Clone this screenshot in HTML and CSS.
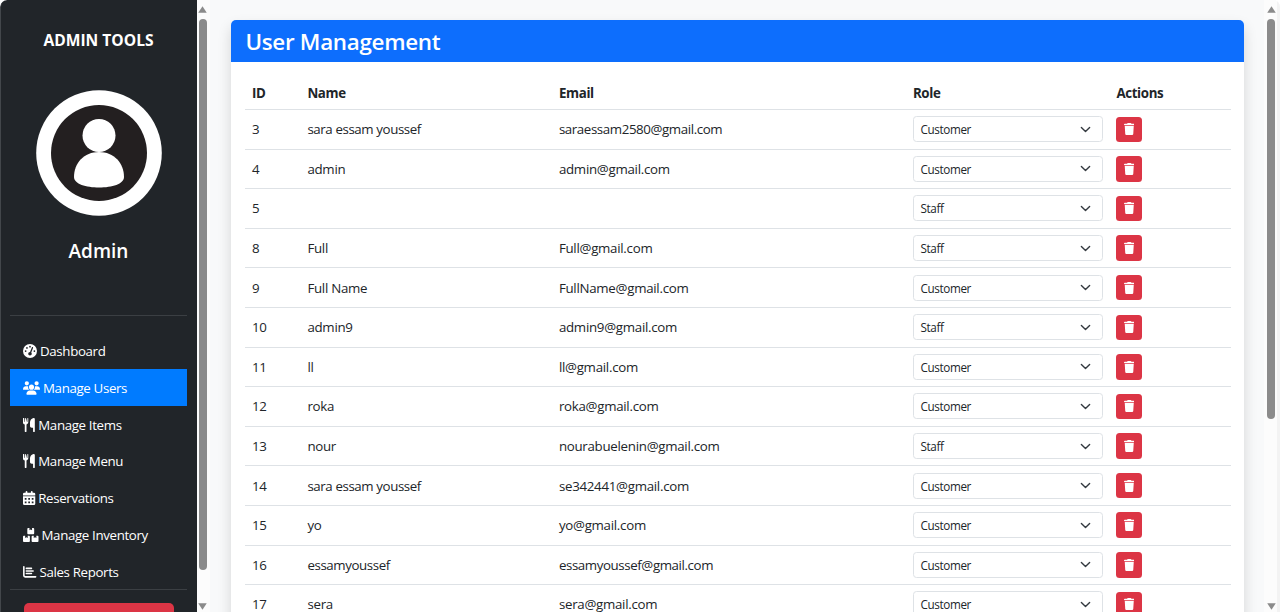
FILE: index.html
```html
<!DOCTYPE html>
<html lang="en">
<head>
<meta charset="utf-8">
<title>User Management</title>
<link rel="stylesheet" href="styles.css">
</head>
<body>
<svg class="defs" aria-hidden="true">
<symbol id="trash" viewBox="0 0 448 512"><path d="M135 18 128 32H32a32 32 0 0 0 0 64h384a32 32 0 0 0 0-64h-96l-7-14A32 32 0 0 0 284 0H164a32 32 0 0 0-29 18zM416 128H32l21 339a48 48 0 0 0 48 45h246a48 48 0 0 0 48-45z"/></symbol>
<symbol id="chev" viewBox="0 0 16 16"><path d="m2 5 6 6 6-6" fill="none" stroke="#343a40" stroke-width="2" stroke-linecap="round" stroke-linejoin="round"/></symbol>
<symbol id="fork" viewBox="0 0 448 512"><path d="M16 0c-8 0-14 6-16 14L-2 150c0 44 27 78 66 88v242a32 32 0 0 0 64 0V238c39-10 66-44 66-88L192 14a16 16 0 0 0-32 2v134h-15L112 15a16 16 0 0 0-32 0L63 150H48V16A16 16 0 0 0 32 0zM432 32c0-18-14-32-32-32-32 0-144 32-144 176v112c0 35 29 64 64 64h48v128a32 32 0 0 0 64 0z"/></symbol>
</svg>
<div class="app">
  <aside class="sidebar">
    <h2 class="brand">ADMIN TOOLS</h2>
    <svg class="avatar" viewBox="0 0 126 126"><circle cx="63" cy="63" r="62.8" fill="#fff"/><circle cx="63" cy="63" r="48" fill="#231f20"/><circle cx="63" cy="45.5" r="16.5" fill="#fff"/><path d="M63 62c15 0 25 11 25 25 0 7-12 10.500-25 10.500S38 94 38 87c0-14 10-25 25-25z" fill="#fff"/></svg>
    <h3 class="who">Admin</h3>
    <nav class="menu">
      <a class="item"><svg style="width:14px" viewBox="0 0 512 512"><path fill-rule="evenodd" d="M0 256a256 256 0 1 1 512 0 256 256 0 1 1-512 0zM288 96a32 32 0 1 0-64 0 32 32 0 1 0 64 0zM256 416c35 0 64-29 64-64 0-17-7-33-18-45l66-163c12-30-34-47-45-17l-66 161c-37 0-65 28-65 64s29 64 64 64zM176 144a32 32 0 1 0-64 0 32 32 0 1 0 64 0zM96 288a32 32 0 1 0 0-64 32 32 0 1 0 0 64zM448 256a32 32 0 1 0-64 0 32 32 0 1 0 64 0z"/></svg><span>Dashboard</span></a>
      <a class="item active"><svg style="width:17px" viewBox="0 0 640 512"><path d="M144 0a80 80 0 1 1 0 160 80 80 0 1 1 0-160zM512 0a80 80 0 1 1 0 160 80 80 0 1 1 0-160zM0 299c0-59 48-107 107-107h43c16 0 31 4 45 10-11 62 12 99 40 118H21c-12 0-21-9-21-21zM405 320c41-35 47-73 41-118 14-7 29-10 45-10h43c59 0 106 48 106 107 0 12-9 21-21 21zM224 224a96 96 0 1 1 192 0 96 96 0 1 1-192 0zM128 485c0-74 60-133 133-133h118c73 0 133 60 133 133 0 15-12 27-27 27H155c-15 0-27-12-27-27z"/></svg><span>Manage Users</span></a>
      <a class="item"><svg style="width:12.250px"><use href="#fork"/></svg><span>Manage Items</span></a>
      <a class="item"><svg style="width:12.250px"><use href="#fork"/></svg><span>Manage Menu</span></a>
      <a class="item"><svg style="width:12.250px" viewBox="0 0 448 512"><path fill-rule="evenodd" d="M128 0a32 32 0 0 1 32 32v32h128V32a32 32 0 0 1 64 0v32h48a48 48 0 0 1 48 48v48H0v-48a48 48 0 0 1 48-48h48V32a32 32 0 0 1 32-32zM0 192h448v272a48 48 0 0 1-48 48H48a48 48 0 0 1-48-48zM64 256v64h64v-64zM192 256v64h64v-64zM320 256v64h64v-64zM64 384v64h64v-64zM192 384v64h64v-64zM320 384v64h64v-64z"/></svg><span>Reservations</span></a>
      <a class="item"><svg style="width:15.500px" viewBox="0 0 576 512"><path d="M192 0h48v80l48-24 48 24V0h48a32 32 0 0 1 32 32v160a32 32 0 0 1-32 32H192a32 32 0 0 1-32-32V32a32 32 0 0 1 32-32zM32 288h48v80l48-24 48 24v-80h48a32 32 0 0 1 32 32v160a32 32 0 0 1-32 32H32a32 32 0 0 1-32-32V320a32 32 0 0 1 32-32zM352 288h48v80l48-24 48 24v-80h48a32 32 0 0 1 32 32v160a32 32 0 0 1-32 32H352a32 32 0 0 1-32-32V320a32 32 0 0 1 32-32z"/></svg><span>Manage Inventory</span></a>
      <a class="item"><svg style="width:13.500px" viewBox="0 0 512 512"><path d="M32 64v336q0 48 48 48h400M128 128h192M128 224h256M128 320h192" transform="translate(0 -8)" fill="none" stroke="#fff" stroke-width="60" stroke-linecap="round"/></svg><span>Sales Reports</span></a>
    </nav>
    <div class="logout"></div>
  </aside>
  <div class="scroll"><svg viewBox="0 0 8 6"><path d="M4 .2 7.800 5.800H.2z"/></svg><i class="thumb"></i><svg viewBox="0 0 8 6"><path d="M.2.2H7.800L4 5.800z"/></svg></div>
  <main class="main">
    <section class="card">
      <h1 class="card-head">User Management</h1>
      <div class="card-body">
        <div class="row head"><b>ID</b><b>Name</b><b>Email</b><b>Role</b><b>Actions</b></div>
        <div class="row"><span>3</span><span class="tight">sara essam youssef</span><span class="tight">saraessam2580@gmail.com</span><div class="select">Customer<svg><use href="#chev"/></svg></div><div class="del"><svg><use href="#trash"/></svg></div></div>
        <div class="row"><span>4</span><span>admin</span><span>admin@gmail.com</span><div class="select">Customer<svg><use href="#chev"/></svg></div><div class="del"><svg><use href="#trash"/></svg></div></div>
        <div class="row"><span>5</span><span></span><span></span><div class="select">Staff<svg><use href="#chev"/></svg></div><div class="del"><svg><use href="#trash"/></svg></div></div>
        <div class="row"><span>8</span><span>Full</span><span>Full@gmail.com</span><div class="select">Staff<svg><use href="#chev"/></svg></div><div class="del"><svg><use href="#trash"/></svg></div></div>
        <div class="row"><span>9</span><span>Full Name</span><span>FullName@gmail.com</span><div class="select">Customer<svg><use href="#chev"/></svg></div><div class="del"><svg><use href="#trash"/></svg></div></div>
        <div class="row"><span>10</span><span>admin9</span><span>admin9@gmail.com</span><div class="select">Staff<svg><use href="#chev"/></svg></div><div class="del"><svg><use href="#trash"/></svg></div></div>
        <div class="row"><span>11</span><span>ll</span><span>ll@gmail.com</span><div class="select">Customer<svg><use href="#chev"/></svg></div><div class="del"><svg><use href="#trash"/></svg></div></div>
        <div class="row"><span>12</span><span>roka</span><span>roka@gmail.com</span><div class="select">Customer<svg><use href="#chev"/></svg></div><div class="del"><svg><use href="#trash"/></svg></div></div>
        <div class="row"><span>13</span><span>nour</span><span>nourabuelenin@gmail.com</span><div class="select">Staff<svg><use href="#chev"/></svg></div><div class="del"><svg><use href="#trash"/></svg></div></div>
        <div class="row"><span>14</span><span class="tight">sara essam youssef</span><span>se342441@gmail.com</span><div class="select">Customer<svg><use href="#chev"/></svg></div><div class="del"><svg><use href="#trash"/></svg></div></div>
        <div class="row"><span>15</span><span>yo</span><span>yo@gmail.com</span><div class="select">Customer<svg><use href="#chev"/></svg></div><div class="del"><svg><use href="#trash"/></svg></div></div>
        <div class="row"><span>16</span><span class="tight">essamyoussef</span><span class="tight">essamyoussef@gmail.com</span><div class="select">Customer<svg><use href="#chev"/></svg></div><div class="del"><svg><use href="#trash"/></svg></div></div>
        <div class="row"><span>17</span><span>sera</span><span>sera@gmail.com</span><div class="select">Customer<svg><use href="#chev"/></svg></div><div class="del"><svg><use href="#trash"/></svg></div></div>
      </div>
    </section>
  </main>
  <div class="scroll page-scroll"><svg viewBox="0 0 8 6"><path d="M4 .2 7.800 5.800H.2z"/></svg><i class="thumb"></i><svg viewBox="0 0 8 6"><path d="M.2.2H7.800L4 5.800z"/></svg></div>
</div>
</body>
</html>
```
FILE: styles.css
```css
* { box-sizing: border-box; }
body { margin: 0; background: #fff; color: #212529; font: 13.3px/20px "Segoe UI", "Open Sans", "Noto Sans", sans-serif; letter-spacing: -.28px; }
h1, h2, h3 { margin: 0; }
.defs { position: absolute; width: 0; height: 0; }
.app { display: flex; height: 612px; overflow: hidden; background: #f8f9fa; border-radius: 7px 7px 0 0; }
.sidebar { width: 197px; flex: none; background: #212529; color: #fff; border-left: 1px solid #43474b; border-top-left-radius: 7px; padding: 30px 10px 0 9px; display: flex; flex-direction: column; align-items: center; }
.brand { font-size: 15.600px; line-height: 20px; font-weight: 700; letter-spacing: 0; }
.avatar { width: 126px; height: 126px; margin-top: 40px; flex: none; }
.who { font-size: 19px; line-height: 28px; font-weight: 600; margin-top: 21px; letter-spacing: 0; }
.menu { width: 100%; flex: none; margin-top: 50px; padding-top: 16.700px; height: 275px; border-top: 1px solid #3b3f43; border-bottom: 1px solid #3b3f43; letter-spacing: -.35px; }
.item { display: flex; align-items: center; gap: 3px; height: 36.800px; padding-left: 13px; }
.item svg { height: 14px; fill: #fff; flex: none; overflow: visible; }
.item.active { background: #007bff; }
.logout { width: 150px; height: 36px; flex: none; margin-top: 13px; background: #dc3545; border-radius: 5px; }
.scroll { width: 13px; flex: none; background: #fcfcfc; padding: 6px 3px 2px 1px; display: flex; flex-direction: column; align-items: center; }
.scroll svg { width: 9px; height: 7px; fill: #8b8b8b; flex: none; }
.thumb { width: 8px; height: 551px; margin: 6px 0 auto; background: #8b8b8b; border-radius: 4px; }
.main { flex: 1; padding: 20px 20px 0 21.400px; }
.card { background: #fff; height: 700px; border-radius: 5px; box-shadow: 0 7px 14px rgba(0,0,0,.15); }
.card-head { height: 42.300px; background: #0d6efd; color: #fff; border-radius: 5px 5px 0 0; padding-left: 14px; font-size: 22.400px; line-height: 43px; font-weight: 600; letter-spacing: -.3px; }
.card-body { padding: 14.200px 13.500px; }
.row { display: grid; grid-template-columns: 55.500px 251.500px 354px 203.500px 1fr; align-items: center; height: 39.600px; border-bottom: 1px solid #dee2e6; }
.row > span, .row > b { padding-left: 7px; }
.row > .tight { letter-spacing: -.4px; }
.head { height: 33.500px; letter-spacing: -.35px; }
.head b { font-weight: 700; }
.select { margin: 0 6.400px 0 7px; height: 26px; border: 1px solid #dee2e6; border-radius: 3.500px; padding: 0 11px 0 6.500px; display: flex; align-items: center; justify-content: space-between; font-size: 11.700px; letter-spacing: -.35px; }
.select svg { width: 11px; height: 11px; }
.del { margin-left: 7px; width: 25.500px; height: 25.500px; background: #dc3545; border-radius: 3.500px; display: grid; place-items: center; }
.del svg { width: 10.500px; height: 12px; fill: #fff; }
.page-scroll { width: 16px; padding-right: 1px; padding-left: 2px; border-right: 3px solid #f3f3f3; }
.page-scroll .thumb { height: 400px; }
```
